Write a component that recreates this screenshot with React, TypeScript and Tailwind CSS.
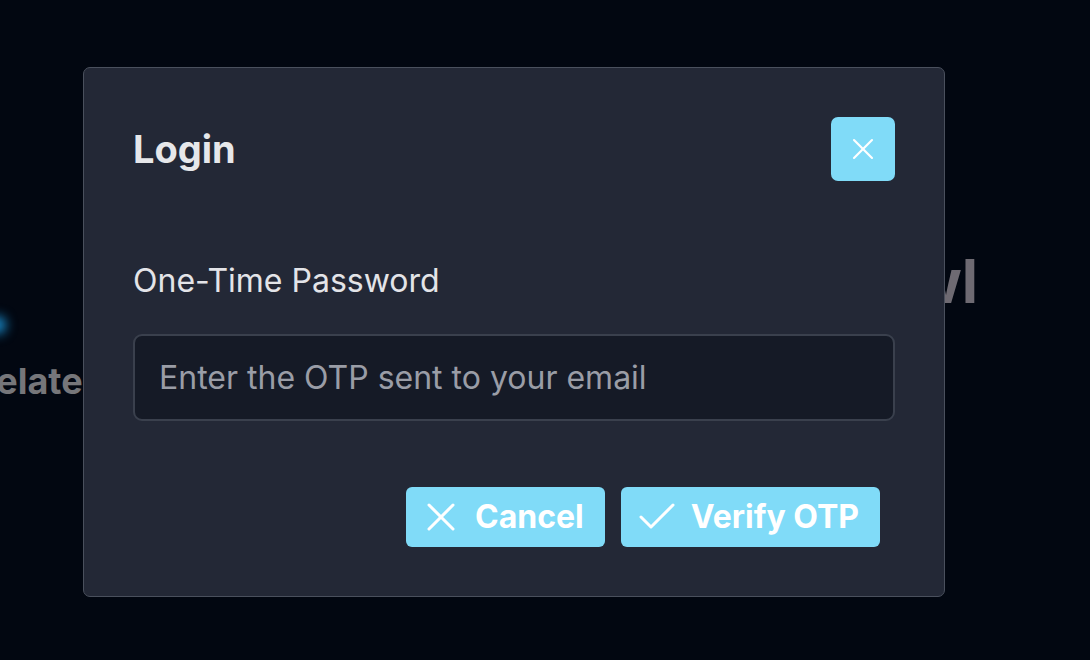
import { X, Check } from "lucide-react"

export default function App() {
  return (
    <div className="relative h-[660px] w-[1090px] overflow-hidden bg-[#020711] font-['Inter',sans-serif]">
      {/* page behind the overlay */}
      <div className="absolute left-[-12px] top-[316px] h-[18px] w-[18px] rounded-full bg-[#1a8fd0] blur-[6px]" />
      <div className="absolute left-[-27px] top-[354px] whitespace-nowrap text-[36px] font-bold text-[#76767a]">Related</div>
      <div className="absolute left-[830px] top-[236px] whitespace-nowrap text-[60px] font-bold text-[#6e6a72]">Newl</div>

      {/* modal */}
      <div className="relative flex pl-[83px] pt-[67px]">
        <div className="flex h-[530px] w-[862px] flex-col rounded-[7px] border border-[#4a505d] bg-[#232836] p-[49px]">
          <div className="flex items-center justify-between">
            <h2 className="text-[38px] font-bold text-[#e6e7ea]">Login</h2>
            <button className="flex h-16 w-16 items-center justify-center rounded-[7px] bg-[#80dbf8]">
              <X className="h-9 w-9 text-white" strokeWidth={1.4} />
            </button>
          </div>

          <label className="mt-[80px] text-[32px] leading-[40px] text-[#e3e4e8]">One-Time Password</label>
          <input
            className="mt-[33px] h-[90px] w-full rounded-[9px] border-2 border-[#3a404d] bg-[#151a26] px-[24px] text-[32px] text-[#e3e4e8] placeholder:text-[#9a9da6] outline-none"
            placeholder="Enter the OTP sent to your email"
          />

          <div className="mt-[66px] mr-[15px] flex justify-end gap-4">
            <button className="flex h-[60px] items-center gap-[10px] rounded-[6px] bg-[#80dbf8] pl-[11px] pr-[21px] text-[32px] font-bold text-white">
              <X className="h-12 w-12" strokeWidth={1.5} />
              Cancel
            </button>
            <button className="flex h-[60px] items-center gap-[10px] rounded-[6px] bg-[#80dbf8] pl-[12px] pr-[21px] text-[32px] font-bold text-white">
              <Check className="h-12 w-12" strokeWidth={1.5} />
              Verify OTP
            </button>
          </div>
        </div>
      </div>
    </div>
  )
}
